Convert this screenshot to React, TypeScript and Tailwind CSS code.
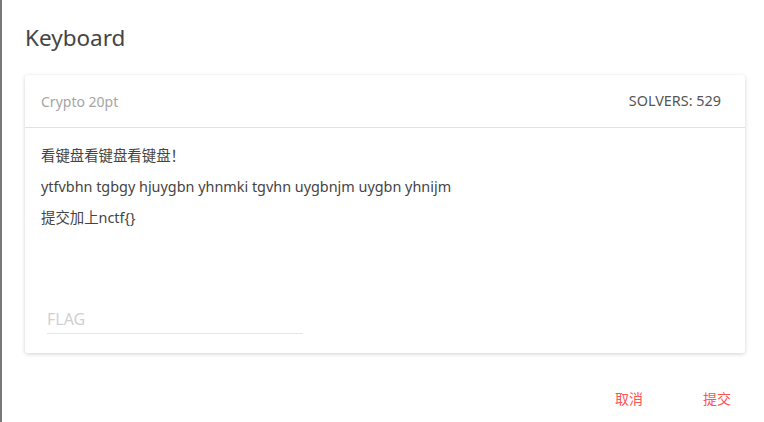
const font = { fontFamily: '"Noto Sans", "Noto Sans CJK SC", sans-serif' };

const lines = [
    '看键盘看键盘看键盘！',
    'ytfvbhn tgbgy hjuygbn yhnmki tgvhn uygbnjm uygbn yhnijm',
    '提交加上nctf{}',
];

export default function App() {
    return (
        <div className="flex h-[422px] w-[764px] bg-white" style={font}>
            <div className="w-[2px] bg-[#777]" />
            <div className="flex flex-1 flex-col">
                <h2 className="px-[23px] pt-[22px] pb-[21px] text-[22.5px] leading-[32px] text-[#444]">Keyboard</h2>

                <div className="ml-[23px] mr-[19px] rounded-[3px] bg-white shadow-[0_1px_4px_rgba(0,0,0,0.18)]">
                    <div className="flex h-[53px] items-center justify-between border-b border-[#e2e2e2] pl-[16px] pr-[24px] text-[14px]">
                        <span className="text-[#a5a5a5]">Crypto 20pt</span>
                        <span className="text-[14.4px] text-[#555]">SOLVERS: 529</span>
                    </div>
                    <div className="flex flex-col gap-[11px] px-[16px] pt-[18px] text-[14.4px] leading-[20px] text-[#444]">
                        {lines.map((l) => (
                            <p key={l}>{l}</p>
                        ))}
                    </div>
                    <div className="px-[22px] pt-[77px] pb-[19px]">
                        <input
                            placeholder="FLAG"
                            className="h-[29px] w-[256px] border-b border-[#e5e5e5] text-[16px] text-[#444] outline-none placeholder:text-[#cfd0d4]"
                            style={font}
                        />
                    </div>
                </div>

                <div className="flex justify-end gap-[60px] pt-[36px] pr-[33px] text-[14px] leading-[20px] text-[#ff5252]">
                    <button>取消</button>
                    <button>提交</button>
                </div>
            </div>
        </div>
    );
}
